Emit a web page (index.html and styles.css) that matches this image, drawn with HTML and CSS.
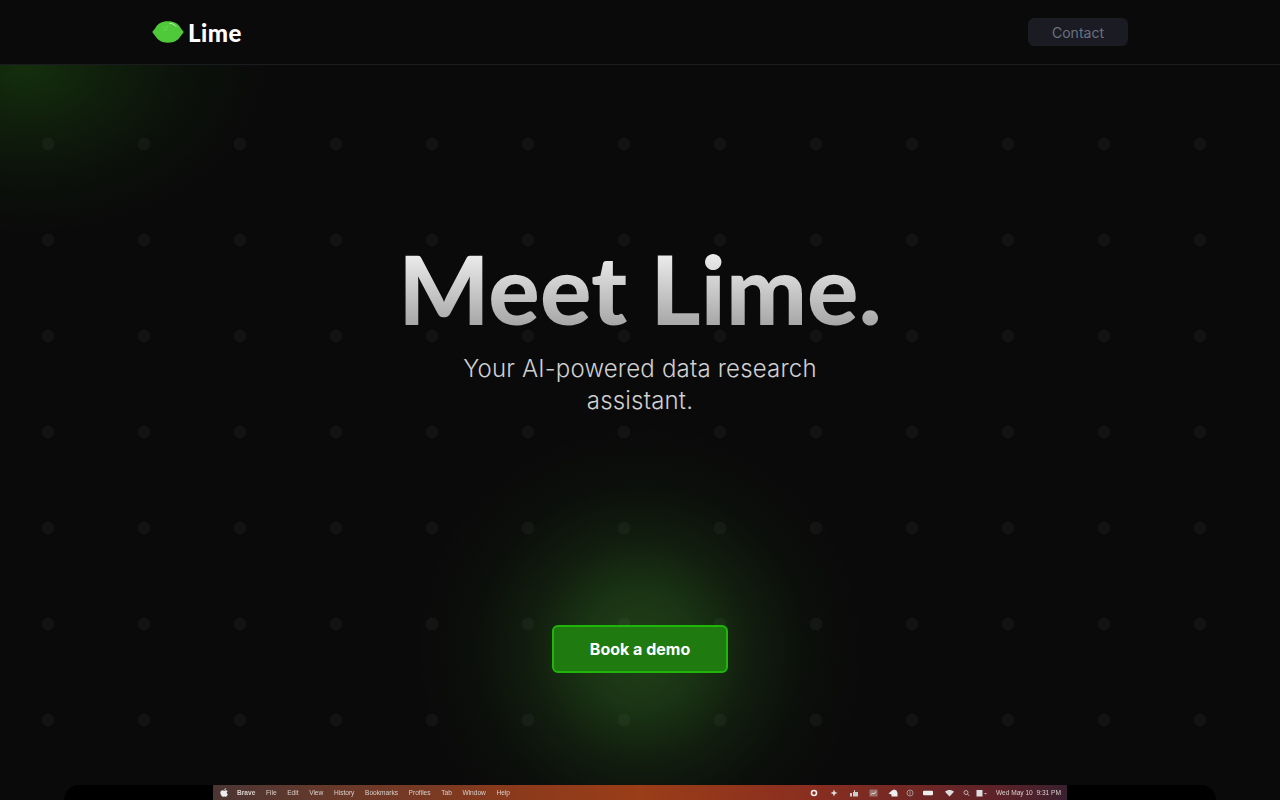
FILE: index.html
```html
<!DOCTYPE html>
<html lang="en">
  <head>
    <meta charset="UTF-8" />
    <meta name="viewport" content="width=device-width, initial-scale=1.0" />
    <title>Lime</title>
    <link rel="stylesheet" href="styles.css">
  </head>
  <body>
    <header class="nav">
      <div class="nav-inner">
        <a class="logo" href="#">
          <svg class="logo-icon" width="32" height="22" viewBox="0 0 32 22">
            <path d="M0.300 11 C1 9.500 2.500 8.500 4 6 C6 3 9.500 0.300 16 0.300 C22.500 0.300 26 3 28 6 C29.500 8.500 31 9.500 31.700 11 C31 12.500 29.500 13.500 28 16 C26 19 22.500 21.700 16 21.700 C9.500 21.700 6 19 4 16 C2.500 13.500 1 12.500 0.300 11 Z" fill="#4fc839" />
            <path d="M18 2.300 C20.500 2.500 22.600 3.600 24 5.400" fill="none" stroke="#c4efba" stroke-width="1" stroke-linecap="round" />
            <g fill="#8fdc7f">
              <circle cx="11" cy="6" r=".6" />
              <circle cx="13.500" cy="7" r=".6" />
              <circle cx="15.500" cy="5.500" r=".6" />
              <circle cx="12.500" cy="9" r=".6" />
              <circle cx="15" cy="8.500" r=".6" />
            </g>
          </svg>
          <span class="logo-text">Lime</span>
        </a>
        <button class="contact">Contact</button>
      </div>
    </header>

    <main class="hero">
      <h1 class="title">Meet Lime.</h1>
      <p class="subtitle">Your AI-powered data research assistant.</p>
      <button class="demo">Book a demo</button>

      <div class="frame">
        <div class="menubar">
          <div class="menu-left">
            <svg class="apple" width="8" height="9" viewBox="0 0 14 16">
              <path d="M10.500 0.500 C10.600 2 9.400 3.600 7.500 3.700 C7.400 2.100 8.800 0.700 10.500 0.500 Z M7.400 4.700 C8.300 4.700 9.300 4 10.600 4 C11.700 4 12.800 4.600 13.400 5.600 C11.200 6.900 11.600 10 13.800 10.900 C13.200 12.700 11.800 15.500 10.200 15.500 C9.200 15.500 8.700 14.900 7.500 14.900 C6.300 14.900 5.700 15.500 4.800 15.500 C3 15.500 0.500 11.800 0.500 8.600 C0.500 5.700 2.400 4 4.400 4 C5.600 4 6.500 4.700 7.400 4.700 Z" fill="#eee" />
            </svg>
            <b>Brave</b>
            <span>File</span>
            <span>Edit</span>
            <span>View</span>
            <span>History</span>
            <span>Bookmarks</span>
            <span>Profiles</span>
            <span>Tab</span>
            <span>Window</span>
            <span>Help</span>
          </div>
          <div class="menu-right">
            <svg width="8" height="8" viewBox="0 0 8 8"><circle cx="4" cy="4" r="2.500" fill="none" stroke="#eee" stroke-width="1.600" /></svg>
            <svg class="gap-xl" width="8" height="8" viewBox="0 0 8 8"><path d="M4 .5 5 3 7.500 4 5 5 4 7.500 3 5 .5 4 3 3Z" fill="#ddd" /></svg>
            <svg class="gap-wide" width="10" height="8" viewBox="0 0 10 8"><path d="M1 4h2v3.500H1Z M4 3h1V1h1v2h3v4.500H4Z" fill="#ccc" /></svg>
            <svg class="gap-mid" width="9" height="8" viewBox="0 0 9 8"><rect x=".5" y=".5" width="8" height="7" fill="#bbb" opacity=".5" /><path d="M2 5.500 4 4 5 5 7 2.500" fill="none" stroke="#eee" stroke-width=".8" /></svg>
            <svg class="gap-mid" width="10" height="8" viewBox="0 0 10 8"><path d="M0.500 4.500 4 1.500 6 .5 8.500 1.500 9.500 4v3.500h-6V5.500Z" fill="#eee" /></svg>
            <svg class="gap-small" width="8" height="8" viewBox="0 0 8 8"><circle cx="4" cy="4" r="3" fill="none" stroke="#bbb" stroke-width=".7" /><path d="M4 2.200v3.600" stroke="#bbb" stroke-width=".7" /></svg>
            <svg width="10" height="8" viewBox="0 0 10 8"><rect y="1.800" width="10" height="4.400" rx="1" fill="#eee" /></svg>
            <svg class="gap-xl" width="9" height="8" viewBox="0 0 9 8"><path d="M0 2.800C2.500 .4 6.500 .4 9 2.800L4.500 7.500Z" fill="#ddd" /></svg>
            <svg width="7" height="8" viewBox="0 0 7 8"><circle cx="3" cy="3.500" r="2" fill="none" stroke="#ccc" stroke-width=".8" /><path d="M4.500 5 6.500 7" stroke="#ccc" stroke-width=".8" /></svg>
            <svg class="gap-tight" width="11" height="8" viewBox="0 0 11 8"><rect x=".5" y="1" width="6" height="6.500" fill="#ddd" /><path d="M8 4h3L9.500 5.500Z" fill="#bbb" /></svg>
            <span>Wed May 10&nbsp; 9:31 PM</span>
          </div>
        </div>
      </div>
    </main>
  </body>
</html>
```

FILE: styles.css
```css
html,
body {
  margin: 0;
  padding: 0;
}

body {
  height: 800px;
  overflow: hidden;
  font-family: Inter, "Liberation Sans", sans-serif;
  background-color: #0a0a0a;
  background-image:
    radial-gradient(circle, rgba(255, 255, 255, 0.035) 6px, transparent 6.5px),
    radial-gradient(circle 225px at 640px 650px, rgba(62, 140, 42, 0.42) 0%, rgba(58, 134, 40, 0.34) 25%, rgba(50, 120, 34, 0.17) 50%, rgba(40, 100, 26, 0.05) 75%, transparent 100%),
    radial-gradient(ellipse 245px 170px at 25px 65px, rgba(40, 120, 20, 0.34) 0%, rgba(36, 110, 18, 0.2) 35%, rgba(30, 100, 16, 0.07) 70%, transparent 100%);
  background-size: 96px 96px, auto, auto;
}

.nav {
  height: 64px;
  border-bottom: 1px solid #1c1c20;
  background-color: #0a0a0b;
}

.nav-inner {
  width: 976px;
  height: 100%;
  margin: auto;
  display: flex;
  align-items: center;
  justify-content: space-between;
}

.logo {
  display: flex;
  align-items: center;
  gap: 4px;
  text-decoration: none;
}

.logo-icon {
  display: block;
}

.logo-text {
  font-family: Lato, sans-serif;
  font-size: 24px;
  font-weight: 900;
  letter-spacing: 0.5px;
  color: #ffffff;
}

.contact {
  width: 100px;
  height: 28px;
  padding: 0;
  border: none;
  border-radius: 6px;
  background-color: #1a1b23;
  color: #6b7280;
  font-family: inherit;
  font-size: 14px;
}

.hero {
  display: flex;
  flex-direction: column;
  align-items: center;
  padding-top: 167px;
}

.title {
  margin: 0;
  font-family: Lato, sans-serif;
  font-size: 96px;
  font-weight: 900;
  line-height: 112px;
  letter-spacing: 0.2px;
  background: linear-gradient(180deg, #ececec 20%, #a6a6a6 84%);
  -webkit-background-clip: text;
  background-clip: text;
  color: transparent;
}

.subtitle {
  width: 384px;
  margin: 9px 0 0;
  text-align: center;
  font-size: 24px;
  font-weight: 300;
  line-height: 32px;
  letter-spacing: 0.18px;
  color: #d0d0d0;
}

.demo {
  width: 176px;
  height: 48px;
  margin-top: 208px;
  padding: 0;
  border: 2px solid #1fb50a;
  border-radius: 6px;
  background-color: #1f7a0f;
  color: #ffffff;
  font-family: inherit;
  font-size: 16px;
  font-weight: 700;
}

.frame {
  width: 1152px;
  height: 15px;
  margin-top: 112px;
  display: flex;
  justify-content: center;
  overflow: hidden;
  background-color: #000000;
  border-radius: 24px 24px 0 0;
}

.menubar {
  width: 854px;
  height: 15px;
  padding: 0 6px 0 7px;
  box-sizing: border-box;
  display: flex;
  align-items: center;
  justify-content: space-between;
  background: linear-gradient(90deg, #4b3534 0%, #63392b 12%, #8a3a1c 35%, #9a3d18 50%, #8a2e20 70%, #5c2228 92%, #3a2030 100%);
  color: #d8d0cc;
  font-family: "Liberation Sans", sans-serif;
  font-size: 6.6px;
  filter: blur(0.5px);
}

.menu-left {
  display: flex;
  align-items: center;
  gap: 10.6px;
}

.apple {
  margin-right: -1.600px;
}

.menu-right {
  display: flex;
  align-items: center;
  gap: 9px;
}

.gap-xl {
  margin-left: 3px;
}

.gap-wide {
  margin-left: 2px;
}

.gap-mid {
  margin-left: 1px;
}

.gap-small {
  margin-left: -1px;
}

.gap-tight {
  margin-left: -3px;
}
```
